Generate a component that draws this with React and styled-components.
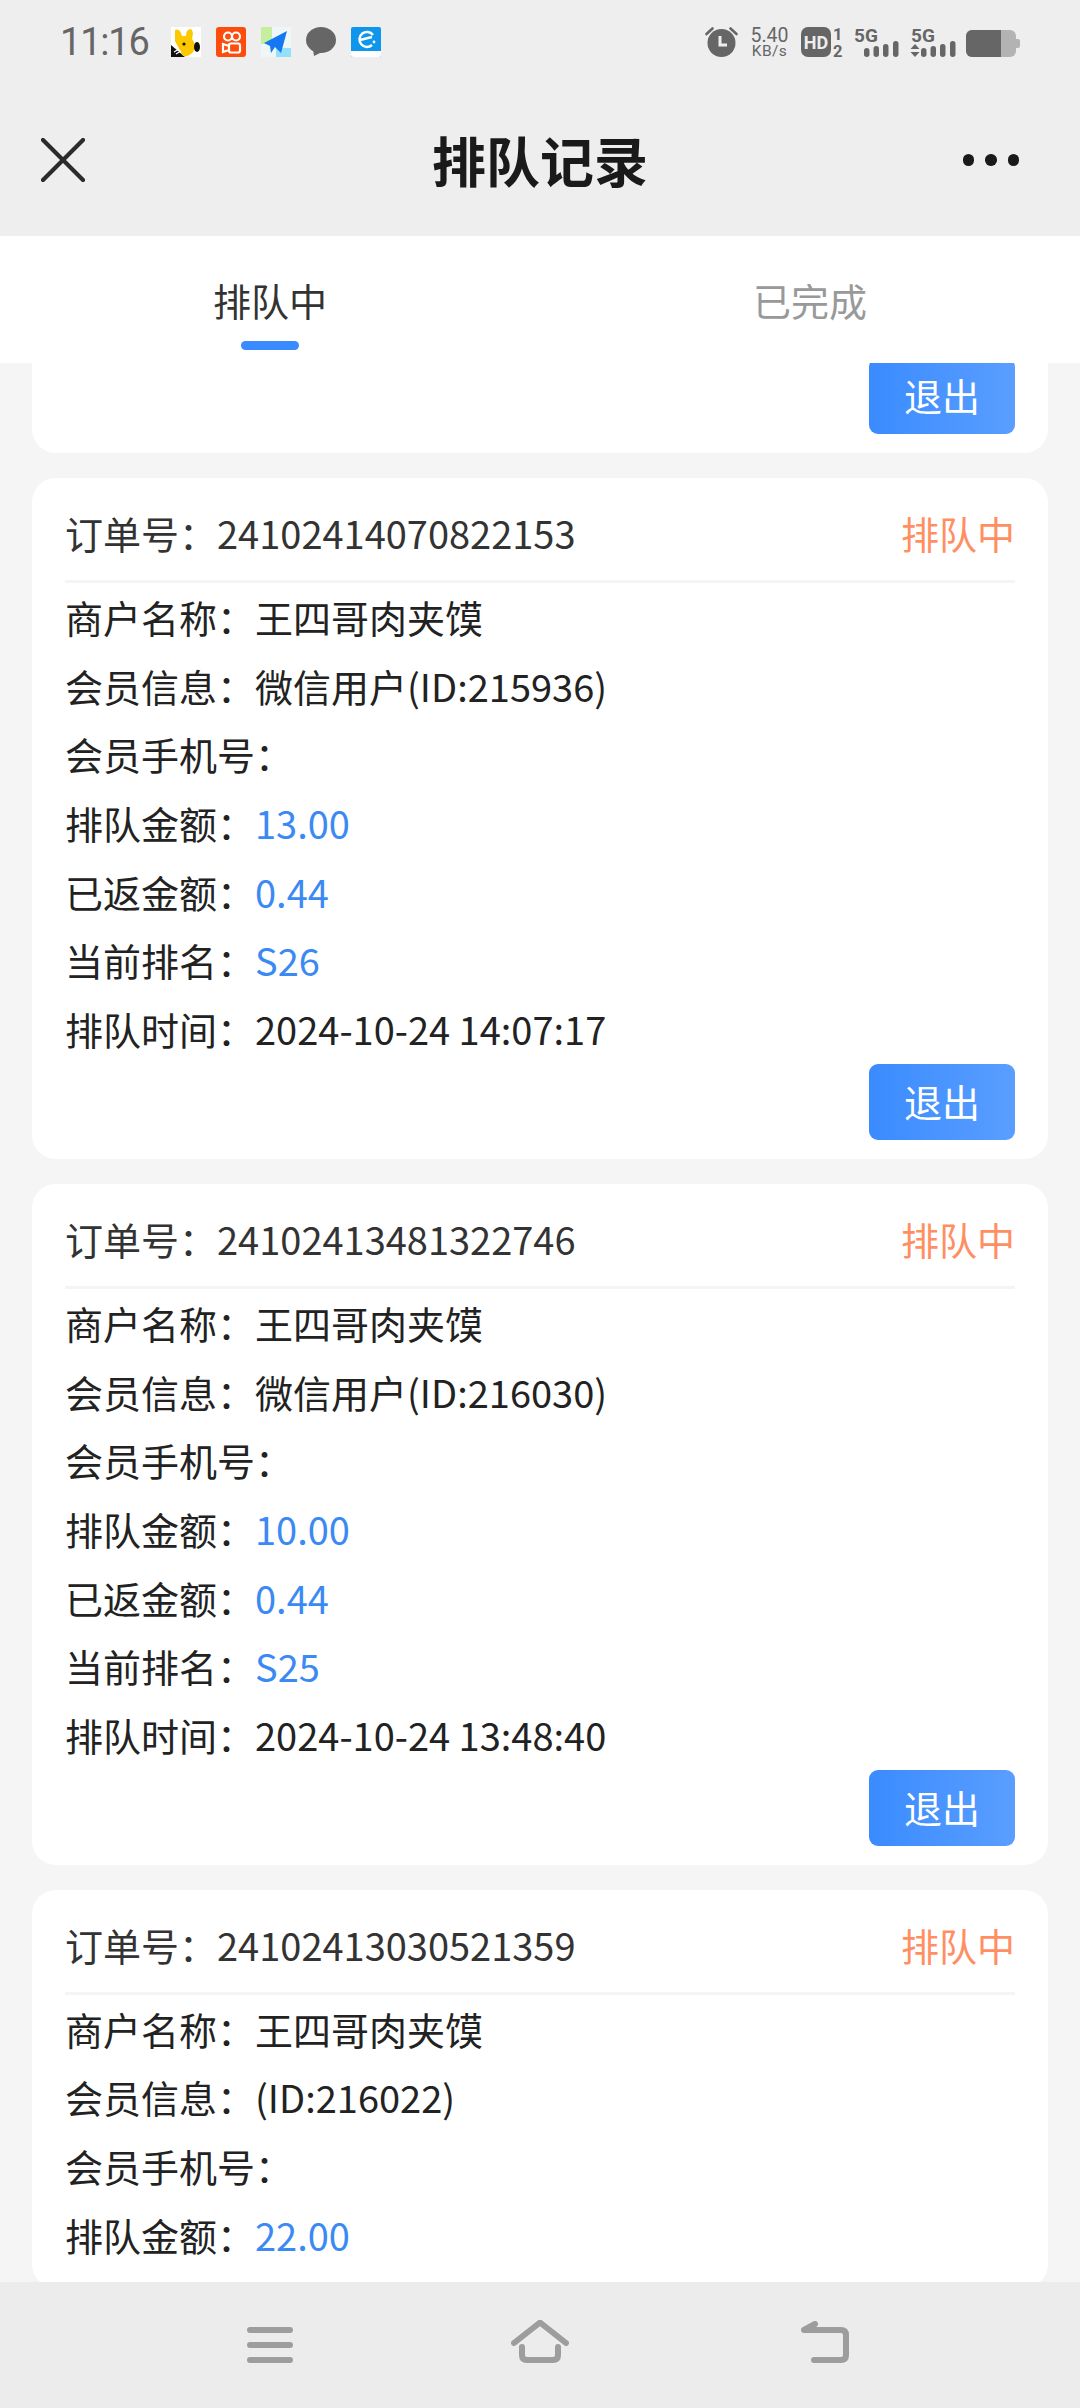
import styled, { createGlobalStyle } from 'styled-components';

const GlobalStyle = createGlobalStyle`
    html, body {
        margin:0;
        padding:0;
        background:#f5f5f5;
    }
    * {
        box-sizing:border-box;
    }
`;

const Screen = styled.div`
    width:1080px;
    height:2408px;
    display:flex;
    flex-direction:column;
    overflow:hidden;
    font-family:"Noto Sans CJK SC", "Noto Sans", sans-serif;
    background:#f5f5f5;
`;

const Top = styled.div`
    background:#eeeeee;
    height:236px;
    flex-shrink:0;
`;

const StatusBar = styled.div`
    height:84px;
    padding:27px 60px 0 60px;
    display:flex;
    justify-content:space-between;
    align-items:flex-start;
    color:#666;
`;

const StatusGroup = styled.div`
    display:flex;
    align-items:flex-start;
`;

const Time = styled.div`
    font-family:Roboto, sans-serif;
    font-size:38px;
    line-height:30px;
    width:111px;
    letter-spacing:-1.2px;
`;

const AppIcon = styled.svg`
    display:block;
    width:30px;
    height:30px;
    margin-right:15px;
`;

const Speed = styled.div`
    width:39px;
    margin:0 12px;
    text-align:center;
    font-family:Roboto, sans-serif;
    color:#666;
    span {
        display:block;
        white-space:nowrap;
    }
`;

const SpeedValue = styled.span`
    font-size:19.5px;
    line-height:17px;
`;

const SpeedUnit = styled.span`
    font-size:15.5px;
    line-height:14px;
    letter-spacing:0.4px;
`;

const StatusSvg = styled.svg`
    display:block;
    height:30px;
    margin-left:${props => props.gap || 0}px;
    fill:#666;
    overflow:visible;
`;

const SvgLabel = styled.text`
    font-family:Roboto, sans-serif;
    font-weight:700;
    font-size:${props => props.size}px;
`;

const HeaderBar = styled.div`
    height:152px;
    padding:0 61px;
    display:grid;
    grid-template-columns:1fr auto 1fr;
    align-items:center;
`;

const CloseIcon = styled.svg`
    display:block;
    margin-left:-20px;
`;

const Title = styled.h1`
    margin:0;
    font-size:54px;
    line-height:60px;
    font-weight:700;
    color:#1a1a1a;
`;

const More = styled.div`
    justify-self:end;
    display:flex;
    gap:11px;
`;

const Dot = styled.i`
    display:block;
    width:11.5px;
    height:11.5px;
    border-radius:50%;
    background:#1a1a1a;
`;

const Tabs = styled.div`
    height:127px;
    flex-shrink:0;
    background:#fff;
    display:flex;
`;

const Tab = styled.div`
    flex:1;
    padding-top:34px;
    display:flex;
    flex-direction:column;
    align-items:center;
    font-size:38px;
    line-height:60px;
    color:${props => props.active ? '#333' : '#999'};
`;

const TabLine = styled.i`
    display:block;
    width:58px;
    height:9px;
    margin-top:11px;
    border-radius:5px;
    background:#3a8bff;
`;

const List = styled.div`
    flex:1;
    min-height:0;
    overflow:hidden;
    padding:0 32px;
    display:flex;
    flex-direction:column;
    gap:25px;
`;

const Card = styled.div`
    flex-shrink:0;
    background:#fff;
    border-radius:24px;
    padding:0 33px 19px;
`;

const PartialCard = styled(Card)`
    height:90px;
    border-radius:0 0 24px 24px;
    overflow:hidden;
    display:flex;
    justify-content:flex-end;
    align-items:flex-end;
`;

const CardHead = styled.div`
    height:105px;
    padding-top:7px;
    border-bottom:3px solid #f4f4f4;
    display:flex;
    justify-content:space-between;
    align-items:center;
    font-size:38px;
    color:#333;
`;

const Status = styled.span`
    color:#ff8f63;
`;

const Row = styled.div`
    height:68.7px;
    line-height:68.7px;
    font-size:38px;
    color:#222;
    white-space:nowrap;
`;

const Value = styled.span`
    color:${props => props.blue ? '#3b8af3' : '#222'};
`;

const Actions = styled.div`
    display:flex;
    justify-content:flex-end;
`;

const QuitButton = styled.button`
    flex-shrink:0;
    width:146px;
    height:76px;
    padding:0 0 3px;
    border:none;
    border-radius:9px;
    background:linear-gradient(90deg, #3a8bff, #5a9eff);
    color:#fff;
    font-family:inherit;
    font-size:38px;
`;

const BottomNav = styled.div`
    height:126px;
    flex-shrink:0;
    background:#ececec;
    padding-left:247px;
    display:flex;
    align-items:flex-start;
`;

const NavIcon = styled.svg`
    display:block;
    flex-shrink:0;
    margin-top:${props => props.top}px;
    margin-left:${props => props.left || 0}px;
    fill:none;
    stroke:#9d9d9d;
    stroke-width:6;
    stroke-linecap:round;
    stroke-linejoin:round;
`;

const orders = [
    { no: '24102414070822153', user: '微信用户(ID:215936)', amount: '13.00', back: '0.44', rank: 'S26', time: '2024-10-24 14:07:17' },
    { no: '24102413481322746', user: '微信用户(ID:216030)', amount: '10.00', back: '0.44', rank: 'S25', time: '2024-10-24 13:48:40' },
    { no: '24102413030521359', user: '(ID:216022)', amount: '22.00' },
];

const OrderCard = ({ order }) => (
    <Card>
        <CardHead>
            <span>订单号：{order.no}</span>
            <Status>排队中</Status>
        </CardHead>
        <Row>商户名称：<Value>王四哥肉夹馍</Value></Row>
        <Row>会员信息：<Value>{order.user}</Value></Row>
        <Row>会员手机号：</Row>
        <Row>排队金额：<Value blue>{order.amount}</Value></Row>
        {order.back && (
            <>
                <Row>已返金额：<Value blue>{order.back}</Value></Row>
                <Row>当前排名：<Value blue>{order.rank}</Value></Row>
                <Row>排队时间：<Value>{order.time}</Value></Row>
                <Actions><QuitButton>退出</QuitButton></Actions>
            </>
        )}
    </Card>
);

const StatusIcons = () => (
    <StatusGroup>
        <Time>11:16</Time>
        <AppIcon viewBox="0 0 30 30">
            <rect width="30" height="30" fill="#fff" />
            <path d="M0 18 L14 30 H0 Z" fill="#111" />
            <path d="M4 3 Q9 1 11 9 L15 9 Q15 2 20 2 Q23 4 21 12 Q26 18 22 25 Q18 30 12 29 L4 14 Z" fill="#fcc800" />
            <ellipse cx="26" cy="20" rx="3" ry="5" fill="#111" />
            <circle cx="13" cy="17" r="1.6" fill="#111" />
            <path d="M3 25 l5 -3 M5 27 l5 -3" stroke="#fff" strokeWidth="1.2" />
        </AppIcon>
        <AppIcon viewBox="0 0 30 30">
            <rect width="30" height="30" rx="3" fill="#fe4c0c" />
            <g fill="none" stroke="#fff" strokeWidth="2.2">
                <circle cx="12" cy="9.5" r="4" />
                <circle cx="20" cy="9.5" r="4" />
                <rect x="13" y="16.5" width="11" height="9" rx="2" />
                <path d="M13 19 L7 17 V25 L13 23" />
            </g>
        </AppIcon>
        <AppIcon viewBox="0 0 30 30">
            <rect width="30" height="30" fill="#eef7f6" />
            <rect width="11" height="17" fill="#c5ee9e" />
            <rect x="15" y="21" width="15" height="9" fill="#92e0fb" />
            <path d="M3 16 L26 4 L20 26 L14 20 L10 26 L9 19 Z" fill="#1677f2" />
        </AppIcon>
        <AppIcon viewBox="0 0 30 30">
            <ellipse cx="15" cy="13" rx="15" ry="13" fill="#666" />
            <path d="M7 22 L8 29 L16 25 Z" fill="#666" />
        </AppIcon>
        <AppIcon viewBox="0 0 30 30">
            <rect width="30" height="30" rx="2" fill="#0e95ec" />
            <path d="M0 24 H30 V28 a2 2 0 0 1 -2 2 H2 a2 2 0 0 1 -2 -2 Z" fill="#fff" />
            <path d="M22 8 A7.5 7.5 0 1 0 21 18 M9 13 L21 10" fill="none" stroke="#fff" strokeWidth="2.4" />
            <circle cx="23" cy="15" r="1.4" fill="#fff" />
        </AppIcon>
    </StatusGroup>
);

const SystemIcons = () => (
    <StatusGroup>
        <StatusSvg width="33" viewBox="0 0 33 30">
            <circle cx="16.5" cy="16" r="14" />
            <path d="M1.5 7 L7.5 1.5 M31.5 7 L25.5 1.5" stroke="#666" strokeWidth="2.6" strokeLinecap="round" />
            <path d="M15 9 V18 H22" fill="none" stroke="#eee" strokeWidth="3" />
        </StatusSvg>
        <Speed>
            <SpeedValue>5.40</SpeedValue>
            <SpeedUnit>KB/s</SpeedUnit>
        </Speed>
        <StatusSvg width="42" viewBox="0 0 42 30">
            <rect width="30" height="30" rx="7" />
            <SvgLabel x="15" y="21.5" size="18" textAnchor="middle" fill="#eee">HD</SvgLabel>
            <SvgLabel x="32" y="13" size="16.5">1</SvgLabel>
            <SvgLabel x="32" y="30" size="16.5">2</SvgLabel>
        </StatusSvg>
        <StatusSvg gap="11" width="45" viewBox="0 0 45 30">
            <SvgLabel x="0" y="15" size="19">5G</SvgLabel>
            <rect x="10" y="21" width="5.5" height="9" rx="2.7" />
            <rect x="19.5" y="19" width="5.5" height="11" rx="2.7" />
            <rect x="29" y="17" width="5.5" height="13" rx="2.7" />
            <rect x="39" y="14" width="5.5" height="16" rx="2.7" />
        </StatusSvg>
        <StatusSvg gap="11" width="46" viewBox="0 0 46 30">
            <SvgLabel x="1" y="15" size="19">5G</SvgLabel>
            <path d="M0.5 22 L5 17 L9.5 22 Z M0.5 25 H9.5 L5 30 Z" />
            <rect x="11" y="21" width="5.5" height="9" rx="2.7" />
            <rect x="20.5" y="19" width="5.5" height="11" rx="2.7" />
            <rect x="30" y="17" width="5.5" height="13" rx="2.7" />
            <rect x="40" y="14" width="5.5" height="16" rx="2.7" />
        </StatusSvg>
        <StatusSvg gap="10" width="54" viewBox="0 0 54 30">
            <rect y="3" width="50" height="27" rx="6" fill="#b3b3b3" />
            <path d="M6 3 H35 V30 H6 a6 6 0 0 1 -6 -6 V9 a6 6 0 0 1 6 -6 Z" />
            <path d="M50 12 h2 a2 2 0 0 1 2 2 v5 a2 2 0 0 1 -2 2 h-2 Z" fill="#b3b3b3" />
        </StatusSvg>
    </StatusGroup>
);

const App = () => {
    return (
        <Screen>
            <GlobalStyle />
            <Top>
                <StatusBar>
                    <StatusIcons />
                    <SystemIcons />
                </StatusBar>
                <HeaderBar>
                    <CloseIcon width="44" height="44" viewBox="0 0 44 44">
                        <path d="M2 2 L42 42 M42 2 L2 42" stroke="#2b2b2b" strokeWidth="4.2" strokeLinecap="round" />
                    </CloseIcon>
                    <Title>排队记录</Title>
                    <More><Dot /><Dot /><Dot /></More>
                </HeaderBar>
            </Top>
            <Tabs>
                <Tab active>排队中<TabLine /></Tab>
                <Tab>已完成</Tab>
            </Tabs>
            <List>
                <PartialCard><QuitButton>退出</QuitButton></PartialCard>
                {orders.map(order => <OrderCard key={order.no} order={order} />)}
            </List>
            <BottomNav>
                <NavIcon top={45} width="46" height="36" viewBox="0 0 46 36">
                    <path d="M3 3 H43 M3 18 H43 M3 33 H43" />
                </NavIcon>
                <NavIcon top={38} left={218} width="58" height="44" viewBox="0 0 58 44">
                    <path d="M3 23 L29 2.5 L55 23 M11 27 V35 Q11 40 16 40 H42 Q47 40 47 35 V27" />
                </NavIcon>
                <NavIcon top={39} left={232} width="48" height="42" viewBox="0 0 48 42">
                    <path d="M14 3 L3 9 H40 Q45 9 45 14 V34 Q45 39 40 39 H13" />
                </NavIcon>
            </BottomNav>
        </Screen>
    );
};

export default App;
